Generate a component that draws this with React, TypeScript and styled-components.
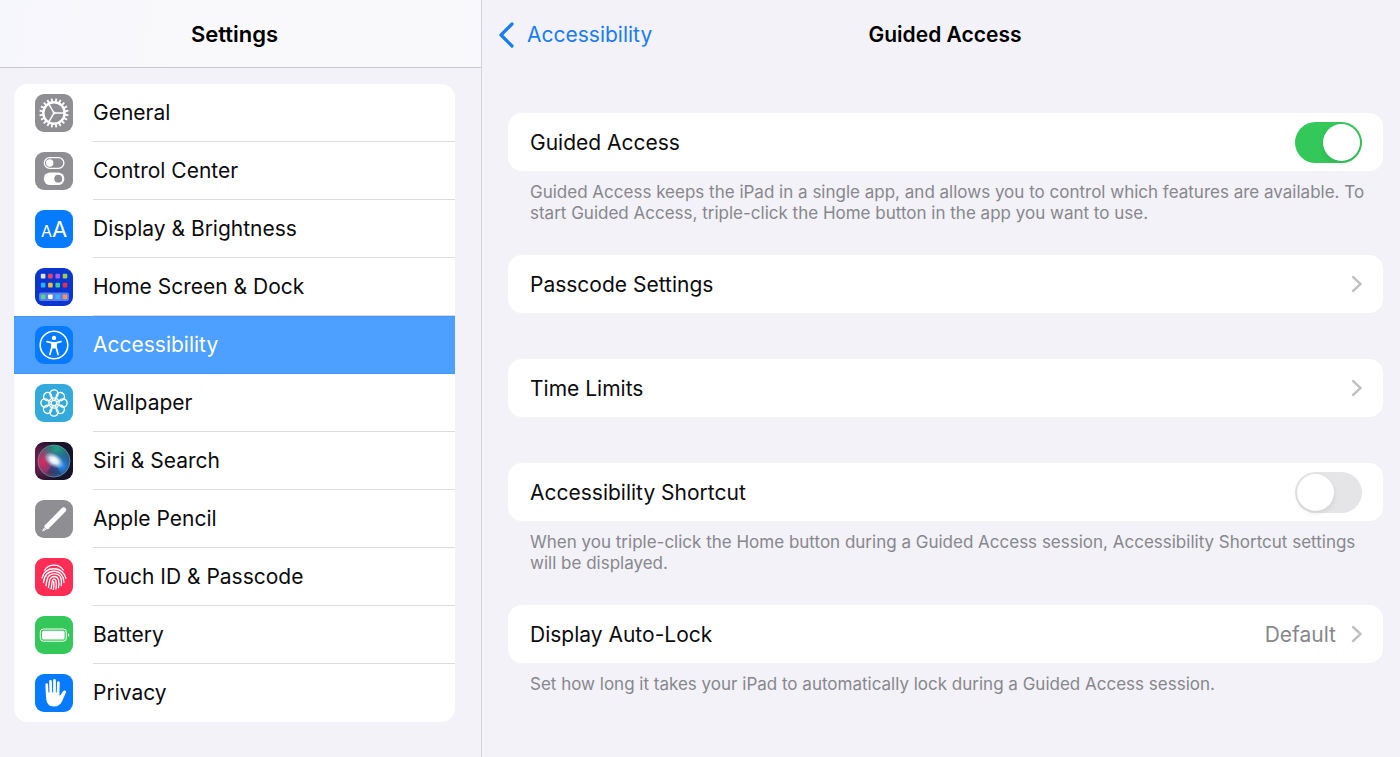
import React, { useState } from "react";
import styled, { createGlobalStyle, css } from "styled-components";

const GlobalStyle = createGlobalStyle`
  *, *::before, *::after { box-sizing: border-box; }
  body {
    margin: 0;
    background: #f2f2f8;
    color: #0c0c0e;
    font-family: Inter, "Liberation Sans", sans-serif;
    font-size: 21px;
    line-height: 28px;
  }
`;

const Shell = styled.div`
  display: grid;
  grid-template-columns: minmax(300px, 482px) minmax(0, 1fr);
  min-height: 100vh;
`;

const Sidebar = styled.aside`
  border-right: 1px solid #d3d3da;
`;

const SidebarHeader = styled.header`
  display: flex;
  align-items: center;
  justify-content: center;
  height: 68px;
  padding: 0 26px 0 14px;
  background: linear-gradient(100deg, #f6f6fd 0%, #f9f9fb 40%);
  border-bottom: 1px solid #c9c9cf;
`;

const Title = styled.h1<{ $large?: boolean }>`
  margin: 0;
  font-size: ${(p) => (p.$large ? 22 : 21)}px;
  line-height: 28px;
  font-weight: 600;
  color: #000;
`;

const Menu = styled.nav`
  margin: 16px 26px 36px 14px;
  background: #fff;
  border-radius: 14px;
  overflow: hidden;
`;

const MenuLabel = styled.span`
  flex: 1;
  display: flex;
  align-items: center;
  align-self: stretch;
  padding-top: 1px;
  border-bottom: 1px solid #dcdcdf;
`;

const MenuItem = styled.a<{ $active?: boolean }>`
  display: flex;
  align-items: center;
  gap: 20px;
  height: 58px;
  padding-left: 21px;
  color: inherit;
  text-decoration: none;

  &:last-child ${MenuLabel} {
    border-color: transparent;
  }

  ${(p) =>
    p.$active &&
    css`
      background: #4da0ff;
      color: #fff;
      box-shadow: inset 0 1px 0 #4696f0, inset 0 -1px 0 #4696f0;
      ${MenuLabel} {
        border-color: transparent;
      }
    `}
`;

const IconTile = styled.svg`
  flex: none;
  width: 38px;
  height: 38px;
  border-radius: 9px;
`;

const Detail = styled.main`
  padding-bottom: 40px;
`;

const DetailHeader = styled.header`
  display: grid;
  grid-template-columns: 1fr auto 1fr;
  align-items: center;
  height: 68px;
  padding: 2px 9px 0 17px;
`;

const BackLink = styled.a`
  display: flex;
  align-items: center;
  gap: 13px;
  color: #1a7cf5;
  text-decoration: none;
`;

const Groups = styled.div`
  padding: 45px 17px 0 26px;
`;

const Group = styled.section<{ $plain?: boolean }>`
  margin-bottom: ${(p) => (p.$plain ? 46 : 31)}px;
`;

const card = css`
  display: flex;
  align-items: center;
  width: 100%;
  height: 58px;
  padding: 0 21px 0 22px;
  border: 0;
  border-radius: 14px;
  background: #fff;
  color: inherit;
  font: inherit;
  text-align: left;
`;

const SwitchRow = styled.label`
  ${card}
`;

const LinkRow = styled.button`
  ${card}
  gap: 14px;
  cursor: pointer;
`;

const RowLabel = styled.span`
  flex: 1;
  padding-top: 2px;
`;

const RowValue = styled.span`
  padding-top: 2px;
  color: #87878b;
`;

const Note = styled.p`
  margin: 11px 12px 0 22px;
  font-size: 17px;
  line-height: 21px;
  color: #87878d;
`;

const Switch = styled.input`
  appearance: none;
  display: flex;
  align-items: center;
  width: 67px;
  height: 41px;
  margin: 0;
  padding: 0 2px;
  border-radius: 21px;
  background: #e5e5e7;
  cursor: pointer;

  &::before {
    content: "";
    width: 37px;
    height: 37px;
    border-radius: 50%;
    background: #fff;
    box-shadow: 0 2px 5px rgba(0, 0, 0, 0.1);
  }

  &:checked {
    justify-content: flex-end;
    background: #34c759;
  }
`;

const Tile = ({ bg, children }: { bg: string; children: React.ReactNode }) => (
  <IconTile viewBox="0 0 38 38" aria-hidden="true">
    <rect width="38" height="38" fill={bg} />
    {children}
  </IconTile>
);

const range = (n: number) => Array.from({ length: n }, (_, i) => i);

const GearIcon = () => (
  <Tile bg="#8e8e93">
    <g stroke="#fff" fill="none">
      <circle cx="19" cy="19" r="10.7" strokeWidth="2.4" />
      {range(20).map((i) => (
        <path key={i} d="M30 19h3.6" strokeWidth="1.8" transform={`rotate(${i * 18 + 9} 19 19)`} />
      ))}
      <path d="M19 19h10M19 19l-5-8.7M19 19l-5 8.7" strokeWidth="1.5" />
    </g>
    <circle cx="19" cy="19" r="1.5" fill="#fff" />
  </Tile>
);

const ControlIcon = () => (
  <Tile bg="#8e8e93">
    <rect x="9.3" y="5.6" width="19.6" height="10.8" rx="5.4" fill="none" stroke="#fff" strokeWidth="1.3" />
    <circle cx="14.7" cy="11" r="3.7" fill="#fff" />
    <rect x="8.8" y="20.4" width="20.6" height="12.6" rx="6.3" fill="#fff" />
    <circle cx="23.2" cy="26.7" r="3.9" fill="#8e8e93" />
  </Tile>
);

const DisplayIcon = () => (
  <Tile bg="#067bff">
    <g fill="#fff" fontFamily="Inter, sans-serif">
      <text x="6" y="27" fontSize="16">A</text>
      <text x="17" y="27" fontSize="22">A</text>
    </g>
  </Tile>
);

const homeApps = [
  ["#dfe4f5", "#f0425f", "#a95bf2", "#9bcf4a"],
  ["#27b4f4", "#f6b73c", "#35cfa6", "#e5343f"],
  ["#53d886", "#ffffff", "#38b5f7", "#ff925c"],
];

const HomeIcon = () => (
  <Tile bg="#0a35cf">
    <rect x="4" y="24.4" width="30" height="8.6" rx="2" fill="#5a7fe6" />
    {homeApps.map((row, y) =>
      row.map((fill, x) => (
        <rect key={`${x}-${y}`} x={5.8 + x * 7.3} y={[5.8, 14.8, 26.4][y]} width="4.6" height="4.6" rx="1" fill={fill} />
      ))
    )}
  </Tile>
);

const AccessibilityIcon = () => (
  <Tile bg="#067bff">
    <circle cx="19" cy="19" r="13.8" fill="none" stroke="#fff" strokeWidth="1.6" />
    <circle cx="19" cy="11.9" r="2.2" fill="#fff" />
    <path
      d="M12 15.7 17 16.8v4.1l-2.1 7.6M26 15.7 21 16.8v4.1l2.1 7.6"
      fill="none"
      stroke="#fff"
      strokeWidth="1.7"
      strokeLinecap="round"
      strokeLinejoin="round"
    />
    <path d="M16.5 16h5v5.6l-1 1h-3l-1-1z" fill="#fff" />
  </Tile>
);

const WallpaperIcon = () => (
  <Tile bg="#34aadc">
    <g fill="none" stroke="#fff" strokeWidth="1.4">
      {range(8).map((i) => (
        <circle key={i} cx="19" cy="10" r="4.1" transform={`rotate(${i * 45} 19 19)`} />
      ))}
      {range(8).map((i) => (
        <path key={i} d="M19 14v2.300" transform={`rotate(${i * 45 + 22.5} 19 19)`} />
      ))}
      <circle cx="19" cy="19" r="2.800" />
    </g>
  </Tile>
);

const SiriIcon = () => (
  <Tile bg="#17132c">
    <defs>
      <radialGradient id="siriRed" cx="0.15" cy="0.5" r="0.6">
        <stop offset="0" stopColor="#e0285f" />
        <stop offset="0.500" stopColor="#b8306c" stopOpacity="0.8" />
        <stop offset="1" stopColor="#a0205c" stopOpacity="0" />
      </radialGradient>
      <radialGradient id="siriTeal" cx="0.6" cy="0.12" r="0.6">
        <stop offset="0" stopColor="#1fa08c" />
        <stop offset="1" stopColor="#209b8b" stopOpacity="0" />
      </radialGradient>
      <radialGradient id="siriBlue" cx="0.75" cy="0.65" r="0.5">
        <stop offset="0" stopColor="#2a90f5" />
        <stop offset="1" stopColor="#2060c0" stopOpacity="0" />
      </radialGradient>
      <radialGradient id="siriGlow">
        <stop offset="0" stopColor="#fff" />
        <stop offset="0.4" stopColor="#eef9ff" stopOpacity="0.9" />
        <stop offset="1" stopColor="#bcdcf5" stopOpacity="0" />
      </radialGradient>
    </defs>
    <rect width="38" height="38" fill="url(#siriRed)" opacity="0.5" />
    <circle cx="19" cy="19" r="16" fill="#2a3f5c" />
    <circle cx="19" cy="19" r="16" fill="url(#siriRed)" />
    <circle cx="19" cy="19" r="16" fill="url(#siriTeal)" />
    <circle cx="19" cy="19" r="16" fill="url(#siriBlue)" />
    <path d="M19 19 26 32 12 31z" fill="#16224a" opacity="0.35" />
    <ellipse cx="19" cy="18.300" rx="11" ry="6.800" fill="url(#siriGlow)" transform="rotate(32 19 18.300)" />
    <circle cx="19" cy="19" r="16" fill="none" stroke="#6fa7a5" strokeOpacity="0.75" strokeWidth="0.9" />
  </Tile>
);

const PencilIcon = () => (
  <Tile bg="#8e8e93">
    <path d="M28.7 9.8 13.2 25.5" stroke="#fff" strokeWidth="5" strokeLinecap="round" />
    <path d="M10.2 24.3 14.7 28.3 10.5 29.9 8.7 28.2z" fill="#fff" />
    <path d="M7.6 31 8.4 28.8 9.8 30.2z" fill="#fff" stroke="#fff" strokeWidth="0.6" />
    <path d="M9 26.8 11.8 29.6" stroke="#8e8e93" strokeWidth="0.7" />
  </Tile>
);

const TouchIcon = () => (
  <Tile bg="#fd2d55">
    <g fill="none" stroke="#fff" strokeWidth="1.35" strokeLinecap="round">
      <path d="M9.7 12C14 5.400 24 5.400 28.300 12" />
      <path d="M7 19.800C8.300 14.500 12.500 10.700 19 10.700S30 15.500 31 20.300" />
      <path d="M8.500 24.500C9.300 18 12.500 13.300 19 13.300S29 18.500 29 24.500" />
      <path d="M11 27.500C11.800 24 11.200 15.900 19 15.900S26.800 22 26.300 27.600" />
      <path d="M13.400 29.600C14.700 25.500 13.500 18.500 19 18.500S24.300 25 23.500 29.700" />
      <path d="M16 30.800C17.300 27.500 16.300 21.100 19 21.100S21.600 27 20.900 31" />
      <path d="M18.700 23.700C19.200 26.500 18.900 29 18.400 31.300" />
    </g>
  </Tile>
);

const BatteryIcon = () => (
  <Tile bg="#34c759">
    <rect x="5.300" y="13" width="26" height="12.200" rx="3" fill="none" stroke="#fff" strokeWidth="1" />
    <rect x="7" y="14.700" width="22.600" height="8.800" rx="1.500" fill="#fff" />
    <path d="M33 17.300c1.800.6 1.800 3 0 3.600z" fill="#fff" />
  </Tile>
);

const HandIcon = () => (
  <Tile bg="#067bff">
    <g stroke="#fff" strokeWidth="2.700" strokeLinecap="round" fill="none">
      <path d="M11.700 10.600 12.300 22" />
      <path d="M15.500 7.300 15.900 20" />
      <path d="M19.500 6.400V20" />
      <path d="M23.400 8.600 23 20" />
    </g>
    <path
      d="M10.900 18.500H24.300V21.500C25.700 21.500 26.300 20 27.300 18.200 28.300 16.500 29.500 16.300 30.400 16.700 31.300 17.200 31.100 18.100 30.700 19.100L27.200 27C25.600 30.600 23 32.500 19 32.500 13.800 32.500 11.500 29.500 11.200 24z"
      fill="#fff"
    />
  </Tile>
);

const menu = [
  { label: "General", Icon: GearIcon },
  { label: "Control Center", Icon: ControlIcon },
  { label: "Display & Brightness", Icon: DisplayIcon },
  { label: "Home Screen & Dock", Icon: HomeIcon },
  { label: "Accessibility", Icon: AccessibilityIcon, active: true },
  { label: "Wallpaper", Icon: WallpaperIcon },
  { label: "Siri & Search", Icon: SiriIcon },
  { label: "Apple Pencil", Icon: PencilIcon },
  { label: "Touch ID & Passcode", Icon: TouchIcon },
  { label: "Battery", Icon: BatteryIcon },
  { label: "Privacy", Icon: HandIcon },
];

const Chevron = () => (
  <svg width="12" height="18" viewBox="0 0 12 18" fill="none" aria-hidden="true">
    <path d="M3 2 10.500 9 3 16" stroke="#c2c2c5" strokeWidth="2.400" strokeLinecap="round" strokeLinejoin="round" />
  </svg>
);

function SwitchSetting({ label, initial }: { label: string; initial: boolean }) {
  const [on, setOn] = useState(initial);
  return (
    <SwitchRow>
      <RowLabel>{label}</RowLabel>
      <Switch type="checkbox" role="switch" checked={on} onChange={() => setOn(!on)} />
    </SwitchRow>
  );
}

function LinkSetting({ label, value }: { label: string; value?: string }) {
  return (
    <LinkRow type="button">
      <RowLabel>{label}</RowLabel>
      {value && <RowValue>{value}</RowValue>}
      <Chevron />
    </LinkRow>
  );
}

export default function App() {
  return (
    <>
      <GlobalStyle />
      <Shell>
        <Sidebar>
          <SidebarHeader>
            <Title as="h2" $large>Settings</Title>
          </SidebarHeader>
          <Menu aria-label="Settings">
            {menu.map(({ label, Icon, active }) => (
              <MenuItem key={label} href="#" $active={active} aria-current={active ? "page" : undefined}>
                <Icon />
                <MenuLabel>{label}</MenuLabel>
              </MenuItem>
            ))}
          </Menu>
        </Sidebar>
        <Detail>
          <DetailHeader>
            <BackLink href="#">
              <svg width="15" height="26" viewBox="0 0 15 26" fill="none" aria-hidden="true">
                <path d="M13 2 2 13 13 24" stroke="#1a7cf5" strokeWidth="3.200" strokeLinecap="round" strokeLinejoin="round" />
              </svg>
              Accessibility
            </BackLink>
            <Title>Guided Access</Title>
          </DetailHeader>
          <Groups>
            <Group>
              <SwitchSetting label="Guided Access" initial={true} />
              <Note>
                Guided Access keeps the iPad in a single app, and allows you to control which features are available. To
                start Guided Access, triple-click the Home button in the app you want to use.
              </Note>
            </Group>
            <Group $plain>
              <LinkSetting label="Passcode Settings" />
            </Group>
            <Group $plain>
              <LinkSetting label="Time Limits" />
            </Group>
            <Group>
              <SwitchSetting label="Accessibility Shortcut" initial={false} />
              <Note>
                When you triple-click the Home button during a Guided Access session, Accessibility Shortcut settings
                will be displayed.
              </Note>
            </Group>
            <Group>
              <LinkSetting label="Display Auto-Lock" value="Default" />
              <Note>Set how long it takes your iPad to automatically lock during a Guided Access session.</Note>
            </Group>
          </Groups>
        </Detail>
      </Shell>
    </>
  );
}
